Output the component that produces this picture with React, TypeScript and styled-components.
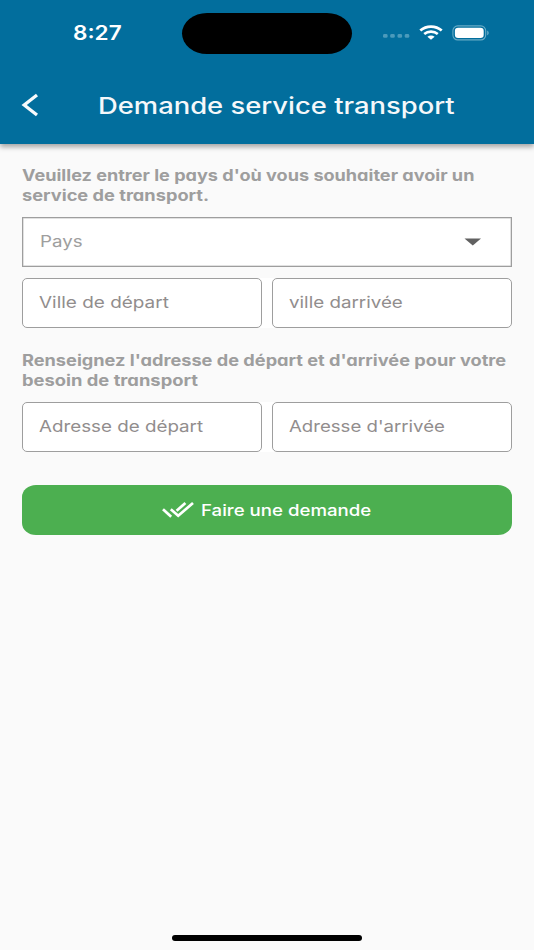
import React from 'react';
import styled, { createGlobalStyle } from 'styled-components';

const GlobalStyle = createGlobalStyle`
  *, *::before, *::after { box-sizing: border-box; }
  body {
    margin: 0;
    background: #fafafa;
    font-family: Inter, "Liberation Sans", sans-serif;
  }
`;

const Screen = styled.div`
  display: flex;
  flex-direction: column;
  width: 534px;
  height: 950px;
  overflow: hidden;
  background: #fafafa;
`;

const Header = styled.header`
  flex: none;
  height: 144px;
  background: #026e9d;
  box-shadow: 0 3px 5px rgba(0, 0, 0, 0.34);
`;

const StatusBar = styled.div`
  display: grid;
  grid-template-columns: 182px 170px 1fr;
  align-items: center;
  height: 66px;
`;

const Wide = styled.span<{ $stretch: number }>`
  display: block;
  width: max-content;
  white-space: nowrap;
  transform: scaleX(${(p) => p.$stretch});
  transform-origin: left center;
`;

const Clock = styled.div`
  padding-left: 72.5px;
  color: #fff;
  font-size: 19.5px;
  font-weight: 600;
  line-height: 24px;
`;

const Island = styled.div`
  height: 41px;
  border-radius: 25px / 20.5px;
  background: #000;
`;

const Indicators = styled.div`
  display: flex;
  align-items: center;
  gap: 9px;
  padding-left: 30px;

  svg { display: block; flex: none; }
`;

const TitleBar = styled.div`
  display: grid;
  grid-template-columns: 97.5px 1fr;
  align-items: center;
  height: 78px;
`;

const BackButton = styled.button`
  display: flex;
  width: 60px;
  margin: 0;
  padding: 0 0 0 20px;
  border: 0;
  background: none;
`;

const Title = styled.h1`
  margin: 0;
  padding-top: 1px;
  color: #f5f8fa;
  font-size: 22.5px;
  font-weight: 500;
  line-height: 28px;
`;

const Form = styled.form`
  display: flex;
  flex: 1;
  flex-direction: column;
  padding: 22px 22px 0;
`;

const Prompt = styled.div<{ $top?: number }>`
  height: 40px;
  margin-top: ${(p) => p.$top ?? 0}px;
  color: #9e9e9e;
  font-size: 15.5px;
  font-weight: 700;
  line-height: 20px;
  font-feature-settings: "cv11";
`;

const Select = styled.div`
  display: flex;
  align-items: center;
  justify-content: space-between;
  height: 50px;
  margin-top: 11px;
  padding: 0 29px 0 17px;
  border: 1px solid #9e9e9e;
  box-shadow: inset 0 0 0 0.5px #c4c4c4;
  background: #fff;
  color: #9e9e9e;
  font-size: 16.2px;
  line-height: 20px;
`;

const SelectLabel = styled.div`
  padding-bottom: 2px;
`;

const FieldRow = styled.div<{ $top: number }>`
  display: grid;
  grid-template-columns: 1fr 1fr;
  gap: 10px;
  margin-top: ${(p) => p.$top}px;
  border-radius: 5px;
  background: #fff;
`;

const Field = styled.div`
  display: flex;
  align-items: center;
  height: 50px;
  padding: 0 0 2px 15.5px;
  border: 1px solid #9e9e9e;
  border-radius: 5px;
  background: #fff;
  color: #918d8d;
  font-size: 16.2px;
  line-height: 20px;
`;

const Submit = styled.button`
  display: flex;
  align-items: center;
  height: 50px;
  margin: 33px 0 0;
  padding: 0 0 0 140px;
  border: 0;
  border-radius: 14px / 12px;
  background: #4caf50;
  color: #fff;
  font-family: inherit;
  font-size: 16.2px;
  font-weight: 500;
  line-height: 20px;

  svg { display: block; flex: none; margin-right: 6px; }
`;

const HomeIndicator = styled.div`
  flex: none;
  width: 190px;
  height: 6px;
  margin: 0 auto 9px;
  border-radius: 3px;
  background: #000;
`;

const SignalDots = () => (
  <svg width="28" height="10" viewBox="0 0 28 10" fill="#4b9abb">
    {[1, 8.2, 15.5, 22.7].map((x) => (
      <rect key={x} x={x} y="6" width="4.6" height="3.8" rx="1.4" />
    ))}
  </svg>
);

const WifiIcon = () => (
  <svg width="24" height="16" viewBox="0 0 24 16" fill="none" stroke="#fff">
    <path d="M1.3 5.5C7.3 0.3 16.7 0.3 22.7 5.5" strokeWidth="2.8" />
    <path d="M5.2 9C9 5.8 15 5.8 18.8 9" strokeWidth="2.6" />
    <path d="M12 14.8L8.4 11.7C10.4 10 13.6 10 15.6 11.7Z" fill="#fff" stroke="none" />
  </svg>
);

const BatteryIcon = () => (
  <svg width="38" height="16" viewBox="0 0 38 16">
    <rect x="0.9" y="0.9" width="32.8" height="14" rx="4.8" fill="none" stroke="#67abc6" strokeWidth="1.1" />
    <rect x="2.9" y="2.8" width="28.8" height="10.2" rx="3.2" fill="#fff" />
    <path d="M35.2 5.5C37.2 6.3 37.2 9.5 35.2 10.3Z" fill="#67abc6" />
  </svg>
);

const BackIcon = () => (
  <svg width="20" height="24" viewBox="0 0 20 24" fill="none" stroke="#f8fafb" strokeWidth="3.3">
    <path d="M17 2L4.2 12L17 22" />
  </svg>
);

const CaretIcon = () => (
  <svg width="18" height="8" viewBox="0 0 18 8">
    <path d="M0.5 0.5H17L8.8 7.5Z" fill="#616161" />
  </svg>
);

const DoubleCheckIcon = () => (
  <svg width="33" height="18" viewBox="0 0 33 18" fill="none" stroke="#fff" strokeWidth="2.7">
    <path d="M1 8.3L9.2 15.8" />
    <path d="M8.8 8.3L16.2 14.8L31 2" />
    <path d="M14.6 9.8L23.4 2" />
  </svg>
);

export default function App() {
  return (
    <>
      <GlobalStyle />
      <Screen>
        <Header>
          <StatusBar>
            <Clock><Wide $stretch={1.155}>8:27</Wide></Clock>
            <Island />
            <Indicators>
              <SignalDots />
              <WifiIcon />
              <BatteryIcon />
            </Indicators>
          </StatusBar>
          <TitleBar>
            <BackButton type="button" aria-label="Retour"><BackIcon /></BackButton>
            <Title><Wide $stretch={1.217}>Demande service transport</Wide></Title>
          </TitleBar>
        </Header>
        <Form>
          <Prompt>
            <Wide $stretch={1.167}>Veuillez entrer le pays d'où vous souhaiter avoir un</Wide>
            <Wide $stretch={1.176}>service de transport.</Wide>
          </Prompt>
          <Select>
            <SelectLabel><Wide $stretch={1.155}>Pays</Wide></SelectLabel>
            <CaretIcon />
          </Select>
          <FieldRow $top={11}>
            <Field><Wide $stretch={1.17}>Ville de départ</Wide></Field>
            <Field><Wide $stretch={1.16}>ville darrivée</Wide></Field>
          </FieldRow>
          <Prompt $top={23}>
            <Wide $stretch={1.173}>Renseignez l'adresse de départ et d'arrivée pour votre</Wide>
            <Wide $stretch={1.184}>besoin de transport</Wide>
          </Prompt>
          <FieldRow $top={11}>
            <Field><Wide $stretch={1.16}>Adresse de départ</Wide></Field>
            <Field><Wide $stretch={1.15}>Adresse d'arrivée</Wide></Field>
          </FieldRow>
          <Submit type="button">
            <DoubleCheckIcon />
            <Wide $stretch={1.151}>Faire une demande</Wide>
          </Submit>
        </Form>
        <HomeIndicator />
      </Screen>
    </>
  );
}
